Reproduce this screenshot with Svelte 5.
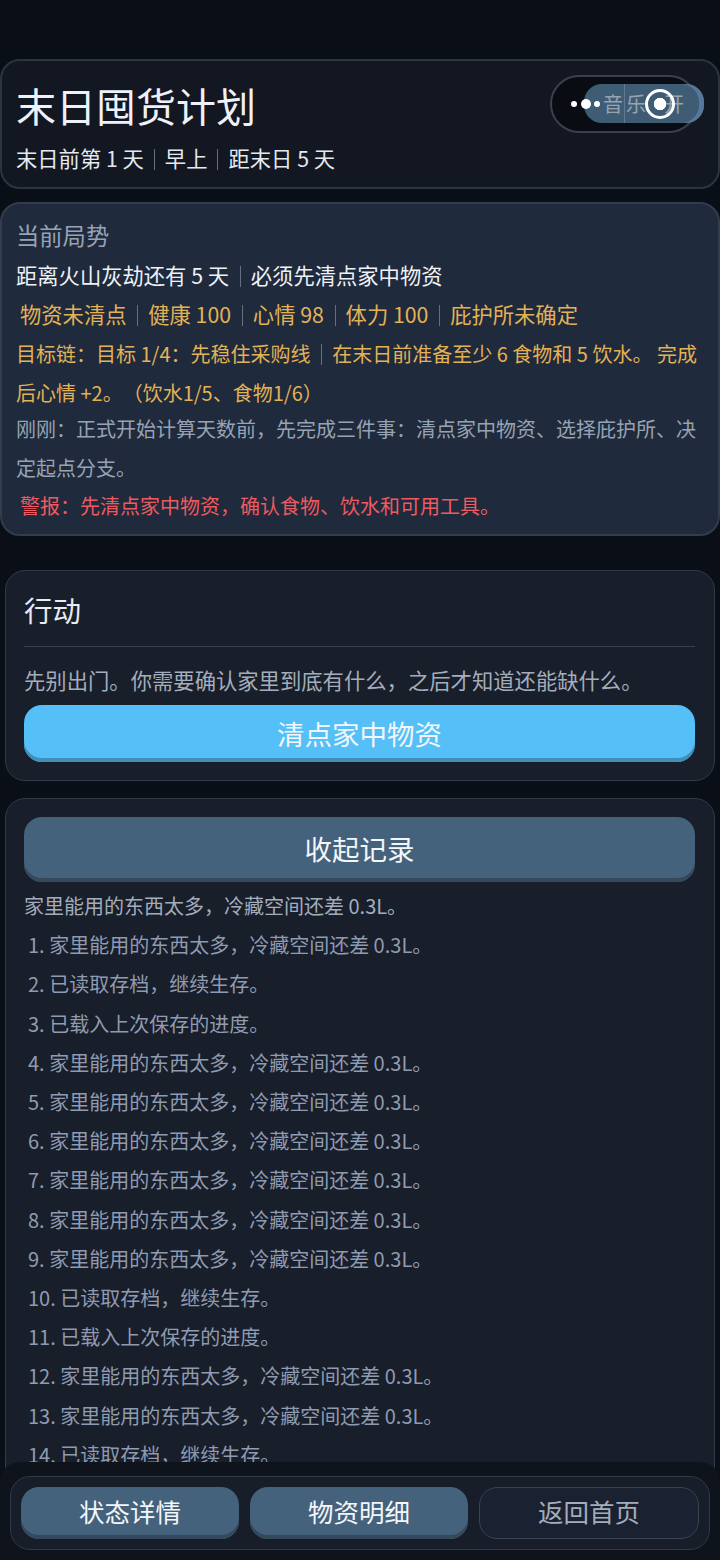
<script>
	const chips = ['物资未清点', '健康 100', '心情 98', '体力 100', '庇护所未确定'];
	const logs = [
		'家里能用的东西太多，冷藏空间还差 0.3L。',
		'已读取存档，继续生存。',
		'已载入上次保存的进度。',
		'家里能用的东西太多，冷藏空间还差 0.3L。',
		'家里能用的东西太多，冷藏空间还差 0.3L。',
		'家里能用的东西太多，冷藏空间还差 0.3L。',
		'家里能用的东西太多，冷藏空间还差 0.3L。',
		'家里能用的东西太多，冷藏空间还差 0.3L。',
		'家里能用的东西太多，冷藏空间还差 0.3L。',
		'已读取存档，继续生存。',
		'已载入上次保存的进度。',
		'家里能用的东西太多，冷藏空间还差 0.3L。',
		'家里能用的东西太多，冷藏空间还差 0.3L。',
		'已读取存档，继续生存。'
	];
</script>

<div class="page">
	<header class="hero">
		<div class="heroText">
			<h1>末日囤货计划</h1>
			<p class="sub">末日前第 1 天<i></i>早上<i></i>距末日 5 天</p>
		</div>
		<div class="capsule"></div>
		<button class="music"><span>音</span><span class="right">乐</span><span class="on">开</span></button>
		<div class="capsuleIcons">
			<span class="dot"></span><span class="dot big"></span><span class="dot"></span>
			<span class="target"></span>
		</div>
	</header>

	<section class="status">
		<h2>当前局势</h2>
		<p class="headline">距离火山灰劫还有 5 天<i></i>必须先清点家中物资</p>
		<p class="chips">
			{#each chips as chip, index}
				{#if index > 0}<i></i>{/if}{chip}
			{/each}
		</p>
		<p class="goal">目标链：目标 1/4：先稳住采购线<i></i>在末日前准备至少 6 食物和 5 饮水。 完成后心情 +2。（饮水1/5、食物1/6）</p>
		<p class="recent">刚刚：正式开始计算天数前，先完成三件事：清点家中物资、选择庇护所、决定起点分支。</p>
		<p class="alert">警报：先清点家中物资，确认食物、饮水和可用工具。</p>
	</section>

	<section class="panel action">
		<h2>行动</h2>
		<p>先别出门。你需要确认家里到底有什么，之后才知道还能缺什么。</p>
		<button class="btn primary">清点家中物资</button>
	</section>

	<section class="panel log">
		<button class="btn slate">收起记录</button>
		<p class="latest">家里能用的东西太多，冷藏空间还差 0.3L。</p>
		<ol>
			{#each logs as line, index}
				<li>{index + 1}. {line}</li>
			{/each}
		</ol>
	</section>

	<nav class="dock">
		<div class="dockInner">
			<button class="btn slate small">状态详情</button>
			<button class="btn slate small">物资明细</button>
			<button class="btn ghost small">返回首页</button>
		</div>
	</nav>
</div>

<style>
	:global(body) {
		margin: 0;
		background: #0b0f17;
	}

	.page {
		box-sizing: border-box;
		width: 720px;
		height: 1560px;
		overflow: hidden;
		padding-top: 59px;
		position: relative;
		font-family: "Noto Sans CJK SC", "Noto Sans", sans-serif;
		font-size: 21.3px;
		line-height: 39px;
		text-spacing-trim: space-all;
		background: linear-gradient(#0a0e16, #0b0f17);
	}

	p, h1, h2 {
		margin: 0;
		font-weight: 400;
	}

	i {
		display: inline-block;
		width: 1px;
		height: 21px;
		margin: 0 10px 0 10.75px;
		vertical-align: -3px;
		background: #66707e;
	}

	button {
		font-family: inherit;
		border: none;
		padding: 0;
	}

	.hero {
		box-sizing: border-box;
		height: 130px;
		position: relative;
		padding: 19px 14px 0;
		background: #121722;
		border: 2px solid #2c3442;
		border-radius: 20px;
	}

	h1 {
		font-size: 40px;
		line-height: 50px;
		color: #eef1f7;
	}

	.sub {
		margin-top: 8px;
		color: #e5e9f0;
	}

	.sub i {
		margin: 0 10px;
	}

	.capsule {
		position: absolute;
		left: 548px;
		top: 14px;
		box-sizing: border-box;
		width: 148px;
		height: 58px;
		border: 2px solid #3a404b;
		border-radius: 29px;
		background: #0a0c13;
	}

	.music {
		position: absolute;
		left: 582px;
		top: 23px;
		box-sizing: border-box;
		width: 120px;
		height: 39px;
		display: flex;
		padding-left: 19px;
		border-radius: 18px;
		background: #3f5c75;
		box-shadow: inset -5px 0 0 #56789a;
		color: #98a3b1;
		font-size: 20px;
		line-height: 39px;
		white-space: nowrap;
	}

	.right {
		margin-left: 1px;
		padding-left: 1px;
		border-left: 1px solid #5f7a92;
	}

	.on {
		margin-left: 18px;
	}

	.capsuleIcons {
		position: absolute;
		left: 569px;
		top: 14px;
		height: 58px;
		display: flex;
		align-items: center;
		gap: 3.5px;
	}

	.dot {
		width: 6px;
		height: 6px;
		border-radius: 50%;
		background: #fff;
	}

	.dot.big {
		width: 10px;
		height: 10px;
	}

	.target {
		position: absolute;
		left: 74px;
		top: 14px;
		box-sizing: border-box;
		width: 30px;
		height: 30px;
		border-radius: 50%;
		border: 3px solid #fff;
		background: radial-gradient(circle, #fff 0 6px, transparent 6.5px);
	}

	.status {
		box-sizing: border-box;
		height: 334px;
		margin-top: 13px;
		padding: 12px 14px 0;
		background: #1f2a3c;
		border: 2px solid #323c4c;
		border-radius: 20px;
	}

	.status h2 {
		font-size: 23.3px;
		color: #97a3b4;
	}

	.headline {
		color: #eef1f6;
	}

	.chips {
		padding-left: 4px;
		color: #e3b255;
	}

	.goal {
		margin-top: 2px;
		color: #e3b255;
		font-size: 20px;
		line-height: 38.5px;
	}

	.recent {
		margin-top: -2px;
		color: #97a3b4;
		font-size: 20px;
		line-height: 38.5px;
	}

	.alert {
		padding-left: 4px;
		color: #ee5a60;
		font-size: 20px;
		line-height: 38.5px;
	}

	.panel {
		box-sizing: border-box;
		margin: 0 5px;
		padding: 0 19px 0 18px;
		background: #191e2b;
		border: 1px solid #323947;
		border-radius: 20px;
	}

	.action {
		height: 211px;
		margin-top: 34px;
	}

	.action h2 {
		height: 76px;
		box-sizing: border-box;
		border-bottom: 1px solid #3a404c;
		font-size: 28.5px;
		line-height: 78px;
		color: #e8ebf2;
	}

	.action p {
		margin-top: 13px;
		color: #a3adbb;
		font-size: 21.33px;
	}

	.btn {
		display: block;
		width: 100%;
		border-radius: 18px;
		text-align: center;
		color: #f3f6fb;
	}

	.primary {
		height: 57px;
		margin-top: 6px;
		padding-bottom: 2px;
		font-size: 27.5px;
		background: #54c0f7;
		box-shadow: inset 0 -4px 0 #3f8fb6;
	}

	.slate {
		background: #45627c;
		box-shadow: inset 0 -4px 0 #35495d;
	}

	.log {
		height: 900px;
		margin-top: 17px;
		padding-top: 18px;
		font-size: 20px;
		line-height: 39.2px;
	}

	.log .btn {
		height: 65px;
		padding-bottom: 4px;
		font-size: 27.5px;
	}

	.latest {
		margin-top: 4px;
		color: #a3adbb;
	}

	ol {
		list-style: none;
		margin: 0;
		padding: 0 0 0 4px;
		color: #8f9bb0;
	}

	.dock {
		position: absolute;
		left: 0;
		right: 0;
		bottom: 0;
		height: 98px;
		padding: 14px 10px 0;
		box-sizing: border-box;
		background: #0e131c;
		border-radius: 20px 20px 0 0;
	}

	.dockInner {
		box-sizing: border-box;
		height: 74px;
		display: flex;
		gap: 11px;
		padding: 10px;
		background: #171d29;
		border: 1px solid #323a48;
		border-radius: 20px;
	}

	.btn.small {
		flex: 1;
		height: 52px;
		padding-bottom: 6px;
		font-size: 25.5px;
	}

	.ghost {
		box-sizing: border-box;
		background: #1a2130;
		border: 1px solid #3a4352;
		color: #a3adbb;
	}
</style>
